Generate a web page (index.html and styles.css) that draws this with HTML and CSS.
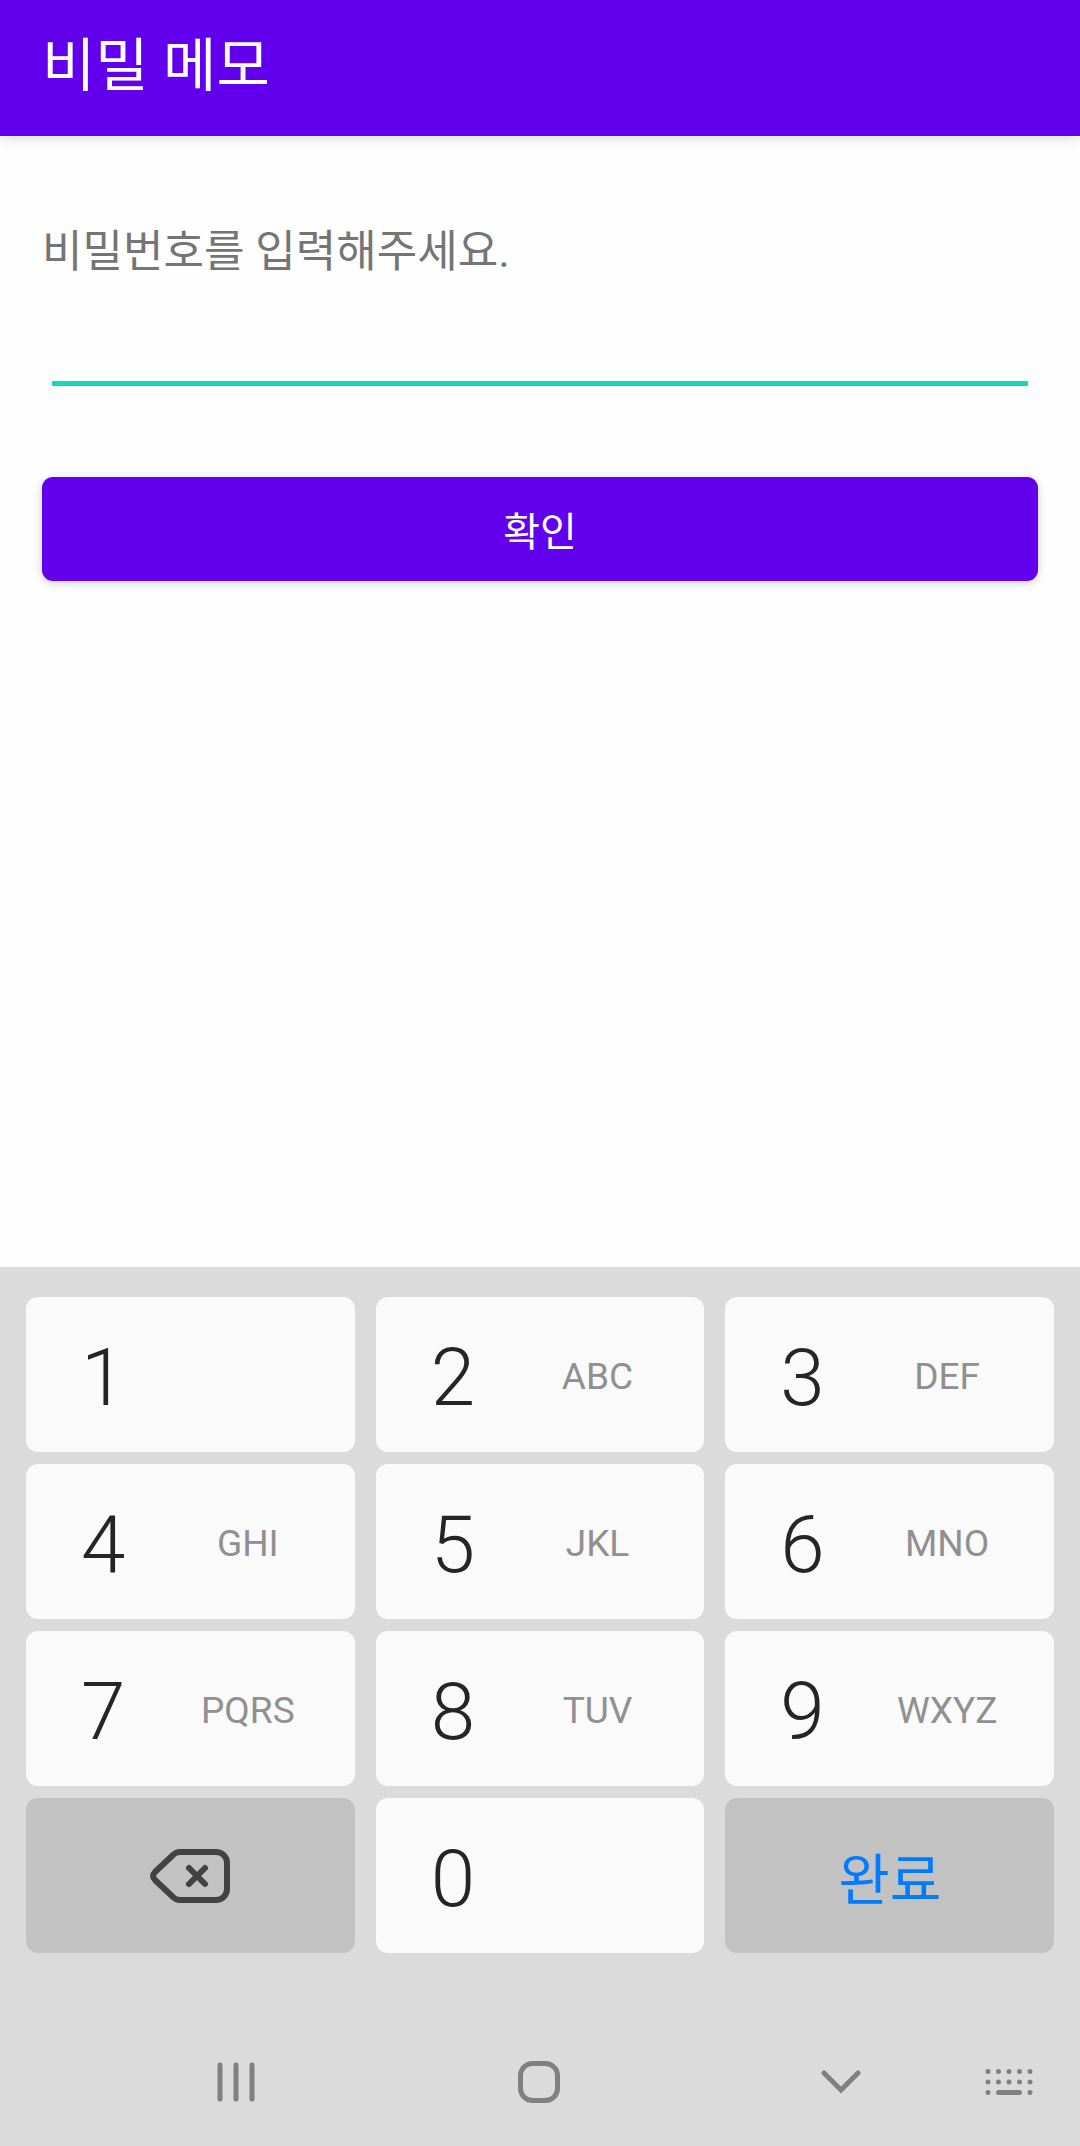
FILE: index.html
```html
<!DOCTYPE html>
<html lang="ko">
<head>
  <meta charset="utf-8">
  <meta name="viewport" content="width=device-width, initial-scale=1">
  <title>비밀 메모</title>
  <link rel="stylesheet" href="styles.css">
</head>
<body>
  <div class="screen">
    <header class="app-bar">
      <h1 class="app-title">비밀 메모</h1>
    </header>

    <main class="content">
      <form class="unlock-form">
        <label class="prompt" for="password">비밀번호를 입력해주세요.</label>
        <input class="password" id="password" type="password" inputmode="numeric" autocomplete="off">
        <button class="confirm" type="button">확인</button>
      </form>
    </main>

    <section class="keyboard" aria-label="숫자 키보드">
      <div class="keys">
        <button class="key" type="button"><span class="digit">1</span></button>
        <button class="key" type="button"><span class="digit">2</span><span class="letters">ABC</span></button>
        <button class="key" type="button"><span class="digit">3</span><span class="letters">DEF</span></button>
        <button class="key" type="button"><span class="digit">4</span><span class="letters">GHI</span></button>
        <button class="key" type="button"><span class="digit">5</span><span class="letters">JKL</span></button>
        <button class="key" type="button"><span class="digit">6</span><span class="letters">MNO</span></button>
        <button class="key" type="button"><span class="digit">7</span><span class="letters">PQRS</span></button>
        <button class="key" type="button"><span class="digit">8</span><span class="letters">TUV</span></button>
        <button class="key" type="button"><span class="digit">9</span><span class="letters">WXYZ</span></button>
        <button class="key-action" type="button" aria-label="지우기">
          <svg class="icon" width="80" height="54" viewBox="0 0 80 54" fill="none" stroke="#424242" stroke-width="6">
            <path d="M30 3H66A11 11 0 0 1 77 14V40A11 11 0 0 1 66 51H30Q26 51 23 48L5 31Q1 27 5 23L23 6Q26 3 30 3Z"/>
            <path d="M39 19L55 35M55 19L39 35" stroke-linecap="round"/>
          </svg>
        </button>
        <button class="key" type="button"><span class="digit">0</span></button>
        <button class="key-action" type="button">완료</button>
      </div>

      <nav class="nav-bar" aria-label="시스템 탐색">
        <div class="nav-main">
          <button class="nav-button" type="button" aria-label="최근 앱">
            <svg class="icon" width="38" height="40" viewBox="0 0 38 40" stroke="#808080" stroke-width="5" stroke-linecap="round">
              <path d="M3 3V37M19 3V37M35 3V37"/>
            </svg>
          </button>
          <button class="nav-button" type="button" aria-label="홈">
            <svg class="icon" width="42" height="42" viewBox="0 0 84 84" fill="none" stroke="#808080" stroke-width="10">
              <rect x="5" y="5" width="74" height="74" rx="24"/>
            </svg>
          </button>
          <button class="nav-button" type="button" aria-label="키보드 닫기">
            <svg class="icon" width="40" height="24" viewBox="0 0 40 24" fill="none" stroke="#808080" stroke-width="5" stroke-linecap="round">
              <path d="M3 3L20 20L37 3"/>
            </svg>
          </button>
        </div>
        <button class="nav-button nav-switch" type="button" aria-label="키보드 변경">
          <svg class="icon" width="48" height="26" viewBox="0 0 96 52" stroke="#808080" stroke-width="10" stroke-linecap="round">
            <path d="M6 5h.01M27 5h.01M48 5h.01M69 5h.01M90 5h.01M6 26h.01M27 26h.01M48 26h.01M69 26h.01M90 26h.01M6 47h.01M90 47h.01M27 47H69"/>
          </svg>
        </button>
      </nav>
    </section>
  </div>
</body>
</html>
```
FILE: styles.css
```css
* {
  box-sizing: border-box;
}

body {
  margin: 0;
  background: #fefefe;
  font-family: Roboto, "Noto Sans CJK KR", sans-serif;
}

button {
  border: 0;
  padding: 0;
  font-family: inherit;
}

.icon {
  display: block;
}

.screen {
  display: flex;
  flex-direction: column;
  min-height: 100vh;
}

.app-bar {
  padding: 26px 42px 30px;
  background: #6200ee;
  box-shadow: 0 3px 12px rgba(0, 0, 0, 0.12);
}

.app-title {
  margin: 0;
  color: #fff;
  font-size: 58px;
  font-weight: 400;
  line-height: 80px;
}

.content {
  flex: 1;
  padding: 84px 42px;
}

.unlock-form {
  display: flex;
  flex-direction: column;
}

.prompt {
  color: #757575;
  font-size: 44px;
  line-height: 64px;
}

.password {
  height: 64px;
  margin: 38px 10px 91px;
  padding: 0;
  border: 0;
  border-bottom: 5px solid #0fd8c4;
  border-radius: 0;
  outline: 0;
  background: transparent;
  font-size: 44px;
}

.confirm {
  height: 104px;
  border-radius: 11px;
  background: #6200ee;
  box-shadow: 0 2px 8px rgba(0, 0, 0, 0.2);
  color: #fff;
  font-size: 40px;
}

.keyboard {
  padding-top: 30px;
  background: #dbdbdb;
}

.keys {
  display: grid;
  grid-template-columns: repeat(3, 1fr);
  grid-auto-rows: 155px;
  gap: 12px 21px;
  padding: 0 26px;
}

.key {
  display: grid;
  grid-template-columns: 47% 41%;
  align-items: baseline;
  align-content: center;
  padding-top: 6px;
  border-radius: 12px;
  background: #fafafa;
  text-align: center;
}

.digit {
  color: #252525;
  font-size: 80px;
  font-weight: 300;
}

.letters {
  align-self: center;
  padding-bottom: 2px;
  color: #909090;
  font-size: 37px;
}

.key-action {
  display: flex;
  align-items: center;
  justify-content: center;
  border-radius: 12px;
  background: #c2c2c2;
  color: #007aff;
  font-size: 56px;
}

.nav-bar {
  display: flex;
  height: 129px;
  margin-top: 64px;
  padding: 0 21px 0 136px;
}

.nav-main {
  display: flex;
  flex: 1;
  justify-content: space-between;
}

.nav-button {
  display: flex;
  flex: 0 0 200px;
  align-items: center;
  justify-content: center;
  background: transparent;
}

.nav-switch {
  flex-basis: 100px;
  margin-left: 18px;
}
```
